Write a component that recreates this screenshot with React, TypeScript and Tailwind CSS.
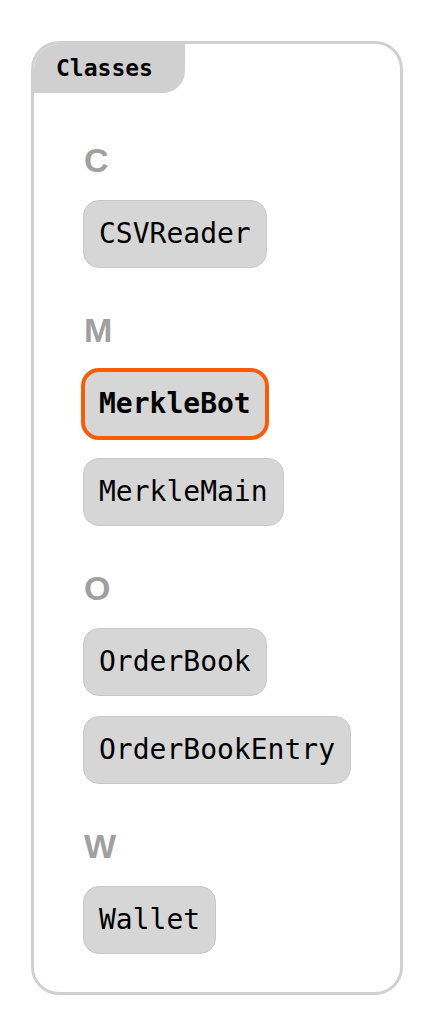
import React from "react";

type Group = { letter: string; items: string[] };

const groups: Group[] = [
  { letter: "C", items: ["CSVReader"] },
  { letter: "M", items: ["MerkleBot", "MerkleMain"] },
  { letter: "O", items: ["OrderBook", "OrderBookEntry"] },
  { letter: "W", items: ["Wallet"] },
];

const selected = "MerkleBot";

const App: React.FC = () => {
  return (
    <div className="min-h-screen bg-white pt-[41px] pl-[31px]">
      <div className="w-[372px] h-[954px] border-[3px] border-[#d0d0d0] rounded-[28px] overflow-hidden">
        {/* Tab */}
        <div className="w-[151px] h-[49px] bg-[#d0d0d0] rounded-br-[22px] flex items-center pl-[22px]">
          <span className="font-['DejaVu_Sans_Mono',monospace] font-bold text-[23px] text-black leading-none">
            Classes
          </span>
        </div>

        <div className="flex flex-col gap-[42px] pt-[47px] pl-[49px]">
          {groups.map((g) => (
            <div key={g.letter} className="flex flex-col items-start gap-[20px]">
              <div className="pl-[1px] font-['Liberation_Sans',sans-serif] font-bold text-[34px] leading-[40px] text-[#a0a0a0]">
                {g.letter}
              </div>
              {g.items.map((item) => (
                <div
                  key={item}
                  className={
                    item === selected
                      ? "h-[68px] flex items-center px-[15px] bg-[#d6d6d6] border border-[#c8c8c8] rounded-[16px] outline-4 outline-[#fc5a03] -outline-offset-2 font-['DejaVu_Sans_Mono',monospace] font-bold text-[28px] text-black"
                      : "h-[68px] flex items-center px-[15px] bg-[#d6d6d6] border border-[#c8c8c8] rounded-[16px] font-['DejaVu_Sans_Mono',monospace] text-[28px] text-black"
                  }
                >
                  {item}
                </div>
              ))}
            </div>
          ))}
        </div>
      </div>
    </div>
  );
};

export default App;
